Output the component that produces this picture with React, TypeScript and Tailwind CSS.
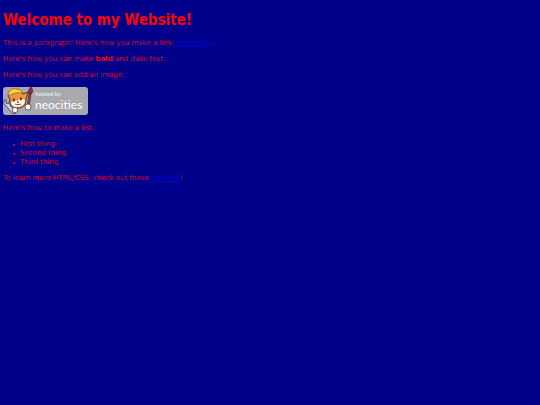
function HostedByNeocities() {
  return (
    <svg viewBox="0 0 85 28" className="h-[28px] w-[85px]" role="img" aria-label="Hosted by Neocities">
      <rect width="85" height="28" rx="3" fill="#a9a9ad" />

      {/* wrench */}
      <path d="M1 13v4l3 3 6 7 3-1-6-8v-4l-2 3-2-1v-3z" fill="#c5d3e2" stroke="#343a51" strokeWidth=".8" />

      {/* brush */}
      <path d="m24 20 2-13h2l-2 13z" fill="#aa4b2d" stroke="#352236" strokeWidth=".7" />
      <path d="M26 7c-1-3 0-5 2-7 2 3 2 5 0 7z" fill="#b81e37" stroke="#33203d" strokeWidth=".8" />

      {/* cat */}
      <path d="M7 4 5 9l2 3c-1 6 2 9 8 9 5 0 8-3 8-8l2-8-5 2c-2-4-9-6-13-3z" fill="#ed9438" stroke="#3a2432" strokeWidth=".9" />
      <path d="M8 15c2 0 4-2 6-1 3-2 5-3 8-1 0 5-3 7-8 7-4 0-6-2-6-5z" fill="#fff5e6" />
      <path d="M5 7c1-4 5-7 9-5 3 0 5 2 5 4-5-1-9 0-13 3z" fill="#f5c82f" stroke="#996421" strokeWidth=".8" />
      <path d="M7 7c4-3 8-3 11-2" fill="none" stroke="#ffe472" strokeWidth="1" />
      <ellipse cx="11" cy="13" rx=".9" ry="1.4" fill="#2c2336" />
      <ellipse cx="18" cy="12" rx=".9" ry="1.4" fill="#2c2336" />
      <path d="m14 15 1 1 1-1zm-2 2c2 1 4 1 6 0" fill="#b94b42" stroke="#793447" strokeWidth=".7" />

      {/* paws */}
      <circle cx="12" cy="23" r="2.7" fill="#fff9ef" stroke="#41303d" strokeWidth=".7" />
      <circle cx="25" cy="20" r="3" fill="#fff9ef" stroke="#41303d" strokeWidth=".7" />

      <text x="32" y="9" fontSize="6" fill="#f2f2f2" fontFamily="Lato, sans-serif">
        hosted by
      </text>
      <text x="32" y="22" fontSize="12" fill="#ffffff" fontFamily="Lato, sans-serif">
        neocities
      </text>
    </svg>
  )
}

function ListItem({ text }: { text: string }) {
  return (
    <li className="flex items-center gap-[5px] before:size-[2px] before:rounded-full before:bg-[#d9001c]">
      {text}
    </li>
  )
}

export default function App() {
  return (
    <main className="min-h-screen bg-[#00008b] px-[3px] pt-[11px] font-['DejaVu_Sans',sans-serif] text-[7px] leading-[9px] text-[#d9001c]">
      <h1 className="mb-[10px] font-['DejaVu_Sans_Condensed','DejaVu_Sans',sans-serif] text-[15px] leading-[18px] font-bold text-[#ff0000]">
        Welcome to my Website!
      </h1>

      <div className="flex flex-col items-start gap-[7px]">
        <p>
          This is a paragraph! Here's how you make a link:{' '}
          <a href="https://neocities.org" className="text-[#0000ce] underline">Neocities</a>.
        </p>
        <p>
          Here's how you can make <strong className="font-bold text-[#ff0000]">bold</strong> and <em>italic</em> text.
        </p>
        <p>Here's how you can add an image:</p>
        <div className="pb-[2px]">
          <HostedByNeocities />
        </div>
        <p>Here's how to make a list:</p>
        <ul className="pl-[10px]">
          <ListItem text="First thing" />
          <ListItem text="Second thing" />
          <ListItem text="Third thing" />
        </ul>
        <p>
          To learn more HTML/CSS, check out these{' '}
          <a href="https://neocities.org/tutorials" className="text-[#0000ce] underline">tutorials</a>!
        </p>
      </div>
    </main>
  )
}
